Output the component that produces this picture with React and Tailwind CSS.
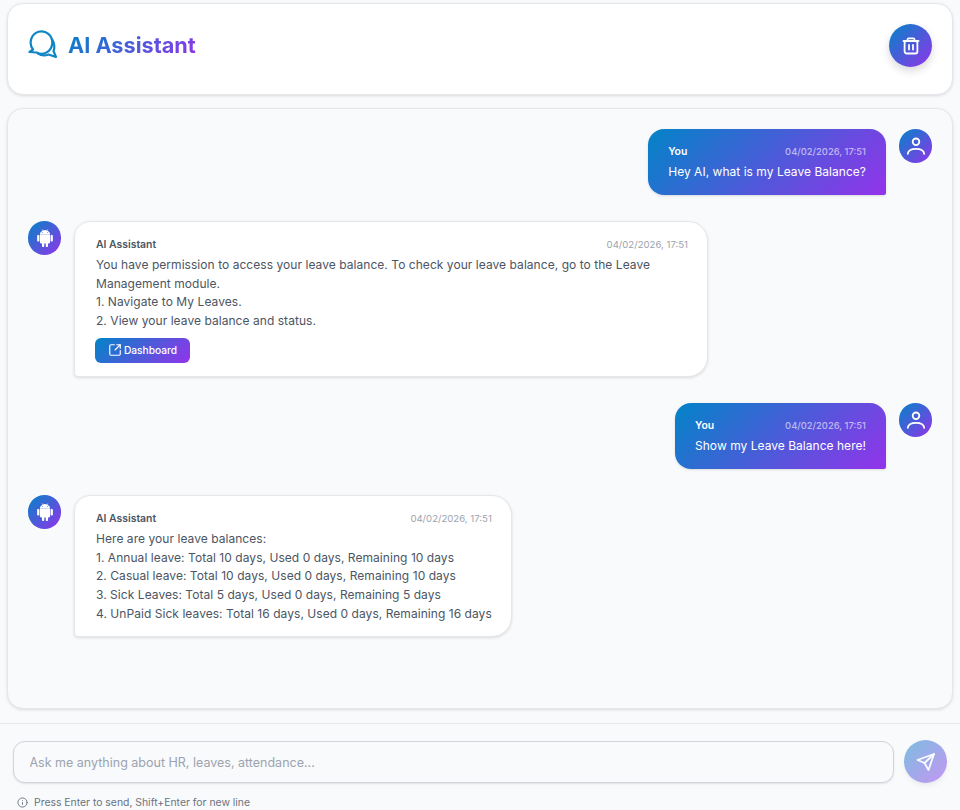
import React from 'react';
import { BsAndroid2 } from 'react-icons/bs';
import { LuSquareArrowOutUpRight, LuInfo } from 'react-icons/lu';

const gradient = 'bg-[linear-gradient(135deg,#0284c7,#9333ea)]';

const ChatsIcon = () => (
    <svg width="30" height="30" viewBox="0 0 30 30" fill="none" stroke="#0e86c4" strokeWidth="2.2" strokeLinecap="round" strokeLinejoin="round" className="shrink-0">
        <path d="M5 19.5 L1.5 22 L8.5 22.5 A10.8 11.2 0 1 0 5 19.5 Z" />
        <path d="M24 9.5 C26.5 13 27 18 25.5 21 L28 27 L20.5 24.5 C17 26 13 25.5 10 23.5" />
    </svg>
);

const TrashIcon = () => (
    <svg width="20" height="20" viewBox="0 0 20 20" fill="none" stroke="white" strokeWidth="1.8" strokeLinecap="round" strokeLinejoin="round">
        <path d="M2.5 5h15" />
        <path d="M6.5 5V3.6c0-.8.6-1.3 1.3-1.3h4.4c.7 0 1.3.5 1.3 1.3V5" />
        <rect x="3.6" y="5" width="12.8" height="12.5" rx="2" />
        <path d="M8 9v4.5M12 9v4.5" />
    </svg>
);

const UserIcon = () => (
    <svg width="20" height="20" viewBox="0 0 20 20" fill="none" stroke="white" strokeWidth="1.8" strokeLinecap="round">
        <circle cx="10" cy="5.8" r="3.3" />
        <path d="M1.8 17.8c.4-3.4 3.8-5 8.2-5s7.8 1.6 8.2 5" />
    </svg>
);

const SendIcon = () => (
    <svg width="20" height="20" viewBox="0 0 20 20" fill="none" stroke="white" strokeWidth="1.8" strokeLinecap="round" strokeLinejoin="round">
        <path d="M18 2 L1.5 8 L8.5 11 L12.5 18 Z" />
        <path d="M18 2 L8.5 11" />
    </svg>
);

const Avatar = ({ children }) => (
    <div className={`w-[33px] h-[34px] rounded-full shrink-0 flex items-center justify-center text-white ${gradient}`}>
        {children}
    </div>
);

const UserMessage = ({ text }) => (
    <div className="flex justify-end gap-[13px]">
        <div className={`h-[66px] rounded-[16px] rounded-br-[2px] px-5 pt-[15px] text-white shadow-sm ${gradient}`}>
            <div className="flex justify-between gap-6 items-center h-[16px] mb-[3px]">
                <span className="text-[10.4px] font-semibold">You</span>
                <span className="text-[9.4px] text-white/60 font-medium">04/02/2026, 17:51</span>
            </div>
            <div className="text-[12px] leading-[18px] tracking-[0.03px]">{text}</div>
        </div>
        <Avatar><UserIcon /></Avatar>
    </div>
);

const AiMessage = ({ lines, children }) => (
    <div className="flex gap-[13px]">
        <Avatar><BsAndroid2 size={18} /></Avatar>
        <div className="w-fit max-w-[634px] bg-white border border-[#e5e7eb] rounded-[20px] rounded-bl-[4px] rounded-tl-[16px] pl-[21px] pr-[19px] pt-[15px] pb-[13px] shadow-[0_1px_3px_rgba(0,0,0,0.12)]">
            <div className="flex justify-between items-center h-[16px] mb-[3px]">
                <span className="text-[10.4px] font-semibold text-[#4b5563]">AI Assistant</span>
                <span className="text-[9.6px] text-[#9ca3af]">04/02/2026, 17:51</span>
            </div>
            <div className="text-[12px] leading-[18.7px] tracking-[0.05px] text-[#4b5563]">
                {lines.map((l) => <div key={l}>{l}</div>)}
            </div>
            {children}
        </div>
    </div>
);

export default function App() {
    return (
        <div className="h-screen overflow-hidden flex flex-col bg-[#f8fafc] font-['Inter',sans-serif]">
            <div className="px-[7px] pt-[3px]">
                <div className="h-[92px] bg-white border border-[#e5e7eb] rounded-[16px] shadow-[0_1px_3px_rgba(0,0,0,0.12)] flex items-center justify-between pl-5 pr-5 pb-[7px]">
                    <div className="flex items-center gap-[10px]">
                        <ChatsIcon />
                        <h1 className="text-[21.7px] font-bold bg-[linear-gradient(135deg,#0284c7,#9333ea)] bg-clip-text text-transparent">AI Assistant</h1>
                    </div>
                    <button className={`w-[43px] h-[43px] rounded-full flex items-center justify-center shadow-[0_4px_8px_rgba(0,0,0,0.15)] ${gradient}`}>
                        <TrashIcon />
                    </button>
                </div>
            </div>

            <div className="flex-1 px-[7px] mt-[13px]">
                <div className="h-[601px] bg-[#f8fafc] border border-[#e5e7eb] rounded-[16px] shadow-[0_1px_3px_rgba(0,0,0,0.12)] pt-5 px-5 flex flex-col gap-[26px]">
                    <UserMessage text="Hey AI, what is my Leave Balance?" />
                    <AiMessage
                        lines={[
                            'You have permission to access your leave balance. To check your leave balance, go to the Leave Management module.',
                            '1. Navigate to My Leaves.',
                            '2. View your leave balance and status.',
                        ]}
                    >
                        <button className={`mt-[7px] -ml-[1px] h-[25px] w-[95px] rounded-[6px] flex items-center justify-center gap-[2px] text-white text-[10.2px] font-medium ${gradient}`}>
                            <LuSquareArrowOutUpRight size={14} />
                            Dashboard
                        </button>
                    </AiMessage>
                    <UserMessage text="Show my Leave Balance here!" />
                    <AiMessage
                        lines={[
                            'Here are your leave balances:',
                            '1. Annual leave: Total 10 days, Used 0 days, Remaining 10 days',
                            '2. Casual leave: Total 10 days, Used 0 days, Remaining 10 days',
                            '3. Sick Leaves: Total 5 days, Used 0 days, Remaining 5 days',
                            '4. UnPaid Sick leaves: Total 16 days, Used 0 days, Remaining 16 days',
                        ]}
                    />
                </div>
            </div>

            <div className="border-t border-[#e5e7eb] px-[13px] pt-[16px] h-[87px]">
                <div className="flex items-center gap-[10px]">
                    <input
                        placeholder="Ask me anything about HR, leaves, attendance..."
                        className="flex-1 h-[42px] mt-[1px] bg-[#f8fafc] border border-[#d1d5db] rounded-[12px] pl-[15.5px] pr-4 text-[12.5px] placeholder:text-[#9ca3af] shadow-[0_1px_2px_rgba(0,0,0,0.1)] outline-none"
                    />
                    <button className={`w-[43px] h-[43px] rounded-full flex items-center justify-center opacity-50 shadow-md ${gradient}`}>
                        <SendIcon />
                    </button>
                </div>
                <div className="mt-[12px] pl-[4px] flex items-center gap-[6px] text-[10.4px] text-[#6b7280]">
                    <LuInfo size={11} />
                    Press Enter to send, Shift+Enter for new line
                </div>
            </div>
        </div>
    );
}
